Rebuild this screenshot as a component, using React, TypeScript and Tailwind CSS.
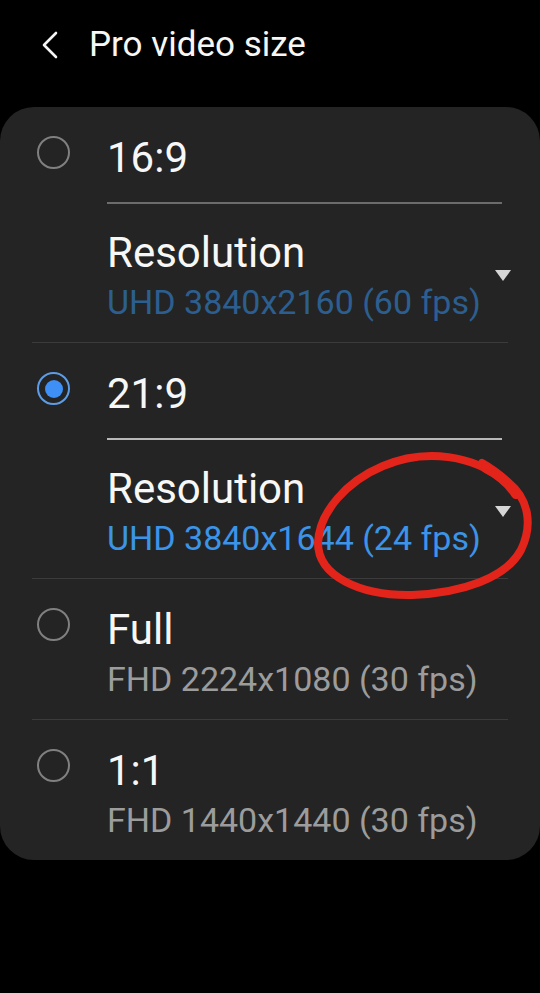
import React from "react";

type Opt = {
  label: string;
  detail: string;
  checked?: boolean;
  expandable?: boolean;
  detailColor: string;
  lineColor?: string;
  last?: boolean;
};

const options: Opt[] = [
  { label: "16:9", detail: "UHD 3840x2160 (60 fps)", expandable: true, detailColor: "text-[#2c5f8f]", lineColor: "bg-[#6c6c6c]" },
  { label: "21:9", detail: "UHD 3840x1644 (24 fps)", checked: true, expandable: true, detailColor: "text-[#3b94e8]", lineColor: "bg-[#b8b8b8]" },
  { label: "Full", detail: "FHD 2224x1080 (30 fps)", detailColor: "text-[#9c9c9c]" },
  { label: "1:1", detail: "FHD 1440x1440 (30 fps)", detailColor: "text-[#9c9c9c]", last: true },
];

const Radio = ({ checked }: { checked?: boolean }) =>
  checked ? (
    <div className="w-[33px] h-[33px] rounded-full border-[2.5px] border-[#5d9de6] flex items-center justify-center">
      <div className="w-[18px] h-[18px] rounded-full bg-[#3e8ff6]" />
    </div>
  ) : (
    <div className="w-[33px] h-[33px] rounded-full border-2 border-[#808080]" />
  );

const Caret = () => (
  <svg width="16" height="11" viewBox="0 0 16 11" className="-mr-[9px] shrink-0">
    <polygon points="0,0 16,0 8,11" fill="#d6d6d6" />
  </svg>
);

const Option = ({ o }: { o: Opt }) => (
  <div>
    <div className="flex">
      <div className="w-[107px] shrink-0 flex justify-center pt-[29px]">
        <Radio checked={o.checked} />
      </div>
      {o.expandable ? (
        <div className="flex-1 pr-[38px]">
          <div className="pt-[27px] text-[42px] leading-[48px] text-[#f7f7f7]">{o.label}</div>
          <div className={`mt-[20px] h-[2px] ${o.lineColor}`} />
          <div className="flex items-center pt-[25px] pb-[20px]">
            <div className="flex-1">
              <div className="text-[42px] leading-[48px] text-[#f7f7f7]">Resolution</div>
              <div className={`mt-[5px] text-[34px] leading-[40px] whitespace-nowrap ${o.detailColor}`}>{o.detail}</div>
            </div>
            <Caret />
          </div>
        </div>
      ) : (
        <div className="flex-1 pt-[27px] pb-[20px]">
          <div className="text-[42px] leading-[48px] text-[#f7f7f7]">{o.label}</div>
          <div className={`mt-[5px] text-[34px] leading-[40px] whitespace-nowrap ${o.detailColor}`}>{o.detail}</div>
        </div>
      )}
    </div>
    {!o.last && <div className="mx-[32px] h-px bg-[#3b3b3b]" />}
  </div>
);

export default function App() {
  return (
    <div className="relative w-[540px] min-h-[993px] bg-black font-['Roboto',sans-serif]">
      <header className="h-[107px] flex items-start pt-[25px]">
        <div className="w-[89px] h-[40px] flex items-center pl-[42px]">
          <svg width="16" height="28" viewBox="0 0 16 28" fill="none">
            <path d="M14 2 L2 14 L14 26" stroke="#f5f5f5" strokeWidth="2.6" strokeLinecap="round" strokeLinejoin="round" />
          </svg>
        </div>
        <h1 className="text-[35px] leading-[40px] text-[#f7f7f7]">Pro video size</h1>
      </header>

      <section className="rounded-[34px] bg-[#242424]">
        {options.map((o) => (
          <Option key={o.label} o={o} />
        ))}
      </section>

      {/* hand-drawn marker annotation */}
      <svg className="absolute left-0 top-0 pointer-events-none" width="540" height="993" fill="none">
        <path
          d="M505 482 C475 455, 425 448, 383 466 C347 481, 319 512, 318 543 C318 576, 360 596, 412 595 C462 593, 506 578, 521 550 C533 525, 529 499, 508 482 C500 475, 491 468, 482 463"
          stroke="#e3241b"
          strokeWidth="8"
          strokeLinecap="round"
          strokeLinejoin="round"
        />
        <path d="M486 468 C498 474, 508 482, 516 494" stroke="#e3241b" strokeWidth="10" strokeLinecap="round" />
      </svg>
    </div>
  );
}
